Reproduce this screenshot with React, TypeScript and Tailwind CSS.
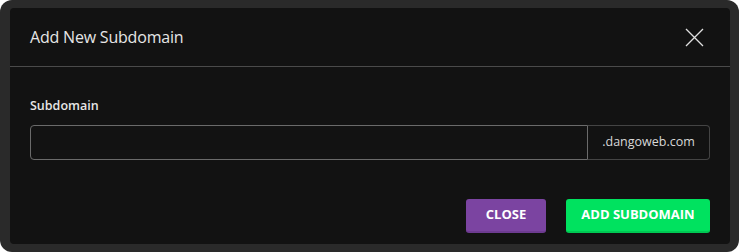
export default function App() {
  return (
    <div className="w-[739px] h-[252px] bg-white">
      <div className="w-full h-full rounded-[12px] bg-[#2a2a2a] pt-[8px] pl-[10px] overflow-hidden font-['Open_Sans',sans-serif]">
        <div className="w-[720px] h-[236px] rounded-[4px] bg-[#121212] flex flex-col">
          {/* header */}
          <div className="h-[59px] flex items-center justify-between pl-[20px] pr-[26px] border-b border-[#4a4a4a]">
            <h2 className="text-[16px] text-[#e6e6e6] tracking-[-0.2px]">Add New Subdomain</h2>
            <svg width="19" height="19" viewBox="0 0 19 19" className="text-[#e0e0e0]">
              <path d="M1 1L18 18M18 1L1 18" stroke="currentColor" strokeWidth="1.3" fill="none" />
            </svg>
          </div>

          {/* body */}
          <div className="px-[20px] pt-[30px]">
            <label className="block text-[12.5px] font-semibold text-[#e6e6e6] mb-[9px]">Subdomain</label>
            <div className="flex h-[35px] w-[680px]">
              <input className="flex-1 h-full rounded-l-[4px] border border-[#6a6a6a] bg-transparent outline-none" />
              <div className="w-[122px] h-full flex items-center justify-center rounded-r-[4px] border border-l-0 border-[#444] text-[12.5px] text-[#d8d8d8]">
                .dangoweb.com
              </div>
            </div>
          </div>

          {/* footer */}
          <div className="mt-auto flex justify-end gap-[20px] px-[20px] pb-[11px]">
            <button className="w-[80px] h-[34px] rounded-[3px] bg-[#7b44a1] border-b-[2px] border-[#6d3b90] text-[13px] font-bold text-white">
              CLOSE
            </button>
            <button className="w-[144px] h-[34px] rounded-[3px] bg-[#00e25f] border-b-[2px] border-[#00c853] text-[13px] font-bold text-white">
              ADD SUBDOMAIN
            </button>
          </div>
        </div>
      </div>
    </div>
  )
}
